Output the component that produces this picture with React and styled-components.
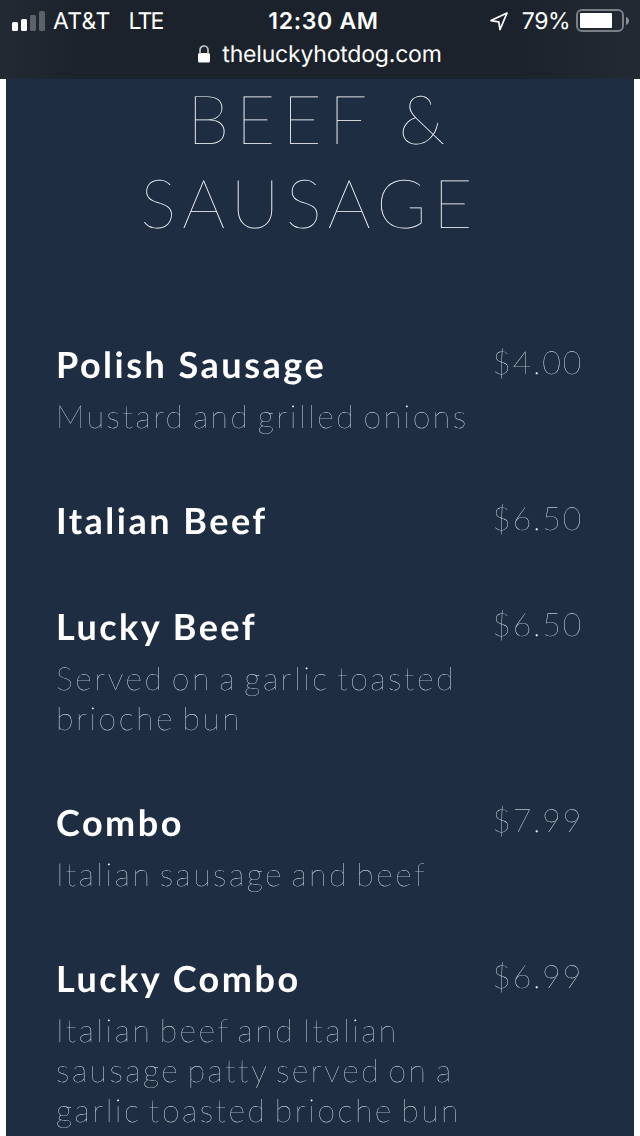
import React from "react";
import styled, { createGlobalStyle } from "styled-components";

const Global = createGlobalStyle`
  * { box-sizing: border-box; }
  html, body { margin: 0; padding: 0; background: #fff; }
`;

const Screen = styled.main`
  width: 640px;
  height: 1136px;
  overflow: hidden;
  background: #fff;
  display: flex;
  flex-direction: column;
  text-rendering: geometricPrecision;
`;

const TopBar = styled.header`
  height: 79px;
  flex: none;
  background: linear-gradient(90deg, #232a33, #1b222b 13%, #1b222b 80%, #232a33);
  color: #fff;
  font-family: Inter, sans-serif;
`;

const StatusRow = styled.div`
  height: 41px;
  display: grid;
  grid-template-columns: 1fr auto 1fr;
  align-items: center;
  padding: 0 11px 0 12px;
  font-size: 23px;
`;

const Side = styled.div`
  display: flex;
  align-items: center;
  justify-content: ${(p) => (p.$end ? "flex-end" : "flex-start")};
`;

const Label = styled.span`
  letter-spacing: ${(p) => p.$ls || "-0.5px"};
  font-weight: ${(p) => p.$weight || 400};
  margin-left: ${(p) => p.$left || 0}px;
`;

const Battery = styled.svg`
  margin-left: 6px;
`;

const UrlRow = styled.div`
  display: flex;
  justify-content: center;
  align-items: center;
  height: 26px;
  gap: 12px;
  font-size: 23px;
  letter-spacing: -0.2px;
`;

const Menu = styled.section`
  flex: 1;
  margin: 0 6px;
  padding: 0 51px 0 50px;
  background: #1e2d42;
  font-family: Lato, sans-serif;
`;

const MenuBody = styled.div`
  will-change: transform;
`;

const Title = styled.h1`
  margin: -2px 0 99px;
  font-size: 68px;
  line-height: 84px;
  font-weight: 100;
  letter-spacing: 6.8px;
  color: #fff;
  text-align: center;
`;

const TitleLine = styled.span`
  display: block;
  letter-spacing: ${(p) => p.$ls || "6.8px"};
  padding-right: ${(p) => p.$trail || 0}px;
`;

const Item = styled.article`
  display: flex;
  justify-content: space-between;
  min-height: 42px;
  margin-bottom: 64px;
`;

const Name = styled.h2`
  margin: 0;
  font-size: 36px;
  line-height: 40px;
  font-weight: 700;
  letter-spacing: 2.5px;
  color: #fff;
`;

const Description = styled.p`
  margin: 12px 0 0;
  font-size: 32px;
  line-height: 40px;
  font-weight: 100;
  letter-spacing: 2.5px;
  word-spacing: -4.2px;
  color: #fff;
`;

const Price = styled.span`
  font-size: 32px;
  line-height: 36px;
  font-weight: 100;
  letter-spacing: 1.8px;
  color: #fff;
`;

const items = [
  ["Polish Sausage", "$4.00", ["Mustard and grilled onions"]],
  ["Italian Beef", "$6.50", []],
  ["Lucky Beef", "$6.50", ["Served on a garlic toasted", "brioche bun"]],
  ["Combo", "$7.99", ["Italian sausage and beef"]],
  ["Lucky Combo", "$6.99", ["Italian beef and Italian", "sausage patty served on a", "garlic toasted brioche bun"]],
];

export default function App() {
  return (
    <Screen>
      <Global />
      <TopBar>
        <StatusRow>
          <Side>
            <svg width="33" height="20" viewBox="0 0 33 20" fill="#fff">
              <rect y="11" width="6" height="9" rx="1.5" />
              <rect x="9" y="8" width="6" height="12" rx="1.5" />
              <rect x="18" y="4" width="6" height="16" rx="1.5" opacity=".28" />
              <rect x="27" width="6" height="20" rx="1.5" opacity=".28" />
            </svg>
            <Label $left={8} $ls="0.3px">AT&amp;T</Label>
            <Label $left={18} $ls="-1.9px">LTE</Label>
          </Side>
          <Label $weight={600} $ls="0.7px" $left={6}>12:30 AM</Label>
          <Side $end>
            <svg width="20" height="20" viewBox="0 0 20 20" fill="none" stroke="#fff" strokeWidth="1.7" strokeLinejoin="round">
              <path d="M17 2 1 9.6l7.8 1.3 1.2 7.8Z" />
            </svg>
            <Label $left={12}>79%</Label>
            <Battery width="53" height="24" viewBox="0 0 53 24">
              <rect x="1" y="1" width="46" height="21" rx="5" fill="none" stroke="#7b8087" strokeWidth="2" />
              <rect x="4" y="4" width="32" height="15" rx="1" fill="#fff" />
              <path d="M50 8c4 1 4 6 0 8Z" fill="#8b8f96" />
            </Battery>
          </Side>
        </StatusRow>
        <UrlRow>
          <svg width="12" height="18" viewBox="0 0 12 18">
            <rect y="8" width="12" height="9.5" rx="1.5" fill="#fff" />
            <path d="M2 9V5a4 4 0 0 1 8 0v4" fill="none" stroke="#c4c7ca" strokeWidth="1.7" />
          </svg>
          <span>theluckyhotdog.com</span>
        </UrlRow>
      </TopBar>
      <Menu>
        <MenuBody>
          <Title>
            <TitleLine>BEEF &amp;</TitleLine>
            <TitleLine $ls="6.3px" $trail={20}>SAUSAGE</TitleLine>
          </Title>
          {items.map(([name, price, lines]) => (
            <Item key={name}>
              <div>
                <Name>{name}</Name>
                {lines.length > 0 && (
                  <Description>
                    {lines.map((l) => <React.Fragment key={l}>{l}<br /></React.Fragment>)}
                  </Description>
                )}
              </div>
              <Price>{price}</Price>
            </Item>
          ))}
        </MenuBody>
      </Menu>
    </Screen>
  );
}
